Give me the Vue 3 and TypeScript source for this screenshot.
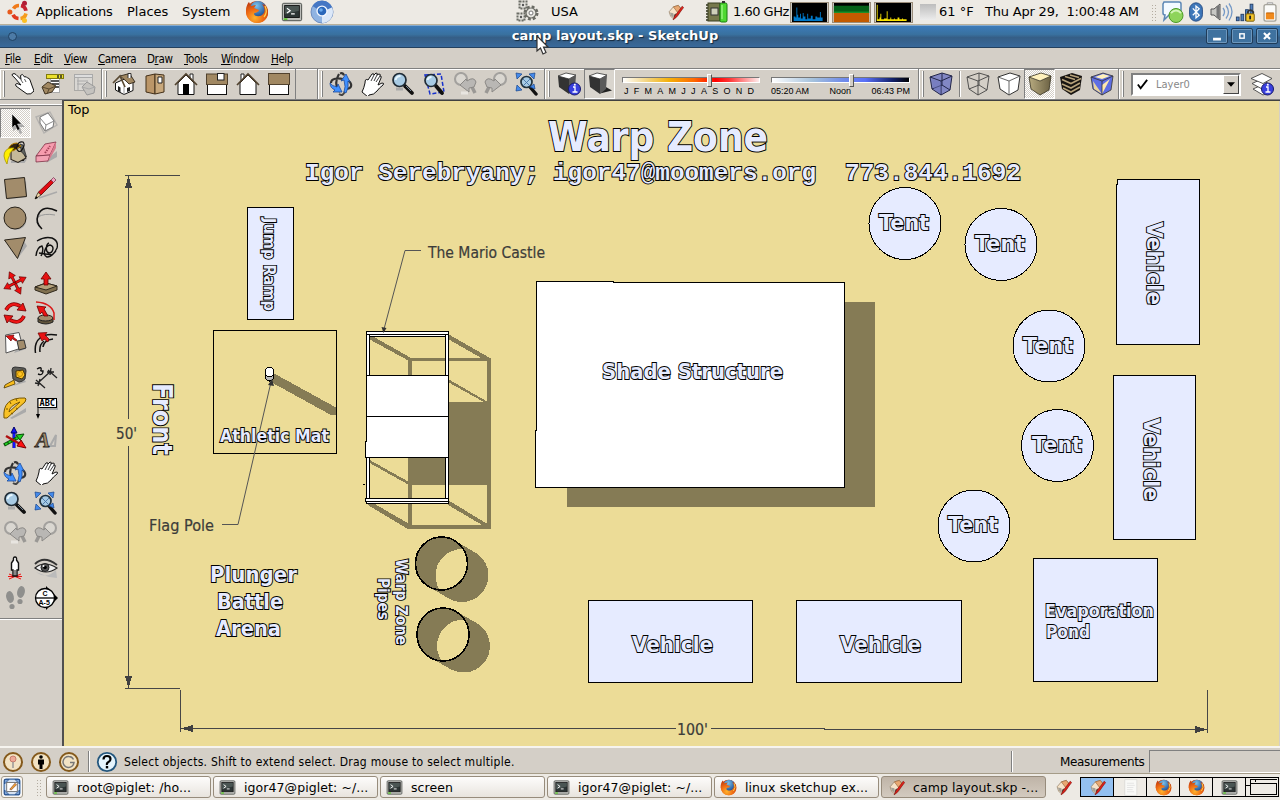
<script setup lang="ts">
interface Label { t: string; x: number; y: number; w: number; s: number; r?: number }

const menus: string[] = ['File', 'Edit', 'View', 'Camera', 'Draw', 'Tools', 'Window', 'Help']

const toolGroups: string[][] = [
  ['select', 'component', 'paint', 'eraser'],
  ['rect', 'pencil', 'circle', 'arc', 'polygon', 'freehand'],
  ['move', 'pushpull', 'rotate', 'followme', 'scale', 'offset'],
  ['tape', 'dimension', 'protractor', 'textlabel', 'axes', 'text3d'],
  ['orbit', 'pan', 'zoom', 'zoomext', 'prev', 'next'],
  ['camera', 'look', 'walk', 'section'],
]

const tasks: { icon: string; text: string; active?: boolean }[] = [
  { icon: 'terminal', text: 'root@piglet: /ho...' },
  { icon: 'terminal', text: 'igor47@piglet: ~/...' },
  { icon: 'terminal', text: 'screen' },
  { icon: 'terminal', text: 'igor47@piglet: ~/...' },
  { icon: 'firefox', text: 'linux sketchup ex...' },
  { icon: 'sketchup', text: 'camp layout.skp -...', active: true },
]

const pager: string[] = ['sketchup', 'doc', 'firefox', 'firefox', 'terminal']

const labels: Label[] = [
  { t: 'Warp Zone', x: 548, y: 151, w: 220, s: 40 },
  { t: 'Tent', x: 879, y: 230, w: 50, s: 21 },
  { t: 'Tent', x: 975, y: 251, w: 50, s: 21 },
  { t: 'Tent', x: 1023, y: 353, w: 50, s: 21 },
  { t: 'Tent', x: 1032, y: 452, w: 50, s: 21 },
  { t: 'Tent', x: 948, y: 532, w: 50, s: 21 },
  { t: 'Vehicle', x: 1147, y: 222, w: 83, s: 22, r: 90 },
  { t: 'Vehicle', x: 1144, y: 418, w: 83, s: 22, r: 90 },
  { t: 'Vehicle', x: 632, y: 652, w: 81, s: 21.5 },
  { t: 'Vehicle', x: 840, y: 652, w: 81, s: 21.5 },
  { t: 'Evaporation', x: 1045, y: 617, w: 109, s: 18 },
  { t: 'Pond', x: 1046, y: 638, w: 44, s: 18 },
  { t: 'Shade Structure', x: 602, y: 379, w: 181, s: 21 },
  { t: 'Front', x: 153, y: 383, w: 72, s: 27, r: 90 },
  { t: 'Jump Ramp', x: 264, y: 218, w: 93, s: 16.5, r: 90 },
  { t: 'Athletic Mat', x: 220, y: 442, w: 109, s: 18 },
  { t: 'Plunger', x: 210, y: 582, w: 87, s: 21.5 },
  { t: 'Battle', x: 217, y: 609, w: 66, s: 21.5 },
  { t: 'Arena', x: 216, y: 636, w: 65, s: 21.5 },
  { t: 'Warp Zone', x: 396, y: 559, w: 86, s: 16, r: 90 },
  { t: 'Pipes', x: 377.5, y: 578, w: 42, s: 16, r: 90 },
]

const tents: [number, number][] = [[905, 223.5], [1001, 244.5], [1049, 346], [1057.5, 445.5], [974, 526]]
const pipes = [
  { id: 'pipeA', x: 441.5, y: 563.5, sx: 462, sy: 575.5 },
  { id: 'pipeB', x: 443, y: 634.5, sx: 463.5, sy: 646 },
]
const months = 'JFMAMJJASOND'.split('')

const turn = (l: Label): string | undefined => (l.r ? `rotate(${l.r} ${l.x} ${l.y})` : undefined)
</script>

<template>
  <div class="screen">
    <svg class="sprite" width="0" height="0" aria-hidden="true">
      <defs>
        <linearGradient id="cubeTan" x1="0" y1="0" x2="1" y2="0"><stop offset="0" stop-color="#b8ab80" /><stop offset="1" stop-color="#6b6143" /></linearGradient>
        <radialGradient id="ffOrange" cx=".4" cy=".75" r=".8"><stop offset="0" stop-color="#ffb32c" /><stop offset=".5" stop-color="#ee6a14" /><stop offset="1" stop-color="#b8330c" /></radialGradient>
        <radialGradient id="ffBlue" cx=".4" cy=".3" r=".8"><stop offset="0" stop-color="#7cc4ee" /><stop offset="1" stop-color="#123f88" /></radialGradient>
      </defs>
      <symbol id="ubuntu" viewBox="0 0 24 24">
        <g fill="none" stroke-width="3.6">
          <path d="M6.500 8.600A6.500 6.500 0 0 1 12 5.500" stroke="#f07a1a" /><path d="M14 5.600A6.500 6.500 0 0 1 19 10.800" stroke="#c5222f" />
          <path d="M6 14.800A6.500 6.500 0 0 0 11.500 18.500" stroke="#e03a20" /><path d="M13.500 18.500A6.500 6.500 0 0 0 19 13.500" stroke="#f59b1d" />
        </g>
        <circle cx="17.5" cy="3.2" r="2.500" fill="#b01c34" /><circle cx="2.900" cy="12" r="2.500" fill="#e85a1c" /><circle cx="17.5" cy="20.6" r="2.500" fill="#fcc023" />
      </symbol>
      <symbol id="firefox" viewBox="0 0 24 24">
        <circle cx="12" cy="12" r="11" fill="url(#ffOrange)" />
        <circle cx="13" cy="9" r="8" fill="url(#ffBlue)" />
        <path d="M1 10C1 6 3 3 4 2l2 4 5-1-2 3 5 2c0 3-5 2-5 4 1 3 7 3 9 0 3-3 1-8-1-10 5 2 6 6 6 9 0 6-5 10-11 10S1 18 1 10z" fill="url(#ffOrange)" />
        <path d="M20 6q3 6-1 11" stroke="#ffd24a" stroke-width="1.3" fill="none" />
      </symbol>
      <symbol id="terminal" viewBox="0 0 24 24">
        <rect x="1.5" y="2.5" width="21" height="19" rx="1.5" fill="#bcbdb9" stroke="#444844" /><rect x="4" y="5" width="16" height="13" fill="#2c3434" stroke="#111" />
        <path d="M4.5 5.5h15v5l-15 4z" fill="#4a5553" /><path d="M6.5 8l3.5 2.5L6.5 13M11 14h4" stroke="#fff" stroke-width="1.3" fill="none" /><path d="M3 19.8h4" stroke="#60c835" stroke-width="2" />
      </symbol>
      <symbol id="chromium" viewBox="0 0 24 24">
        <circle cx="12" cy="12" r="11" fill="#8fb3e2" stroke="#6d8cbf" /><path d="M12 12L2.5 6A11 11 0 0 1 22 7.5z" fill="#4577c4" />
        <path d="M12 12l10-4.5A11 11 0 0 1 12 23z" fill="#dce8f8" /><circle cx="12" cy="11" r="5.6" fill="#f4f8ff" /><circle cx="12" cy="11" r="4.3" fill="#2a67ba" /><circle cx="11" cy="10" r="1.8" fill="#69a9ec" />
      </symbol>
      <symbol id="gears" viewBox="0 0 24 24">
        <g fill="none" stroke="#6b6c65"><circle cx="15" cy="13" r="6" stroke-width="3" stroke-dasharray="2.700 2" /><circle cx="15" cy="13" r="5" fill="#e7e6e0" stroke-width="1.200" />
          <rect x="3.500" y="1.500" width="7" height="7" fill="#e7e6e0" stroke-dasharray="2 1" stroke-width="2" /><rect x="1.500" y="13.500" width="7" height="7" fill="#e7e6e0" stroke-dasharray="2 1" stroke-width="2" /></g>
        <circle cx="7" cy="5" r="1.200" fill="#555" /><circle cx="5" cy="17" r="1.200" fill="#555" /><circle cx="15" cy="13" r="2" fill="#fff" stroke="#777" />
      </symbol>
      <symbol id="sketchup" viewBox="0 0 24 24">
        <path d="M3 11l6-7 7-2 4 5-4 9-7 5-4-4z" fill="#f7e3c8" stroke="#8f7b62" /><path d="M9 4l7-2 4 5-5 5z" fill="#e9a872" stroke="#9a6a3e" /><path d="M4 12l5 1 1 7-4-3z" fill="#a3a097" /><path d="M10 15l3-2 1 4-4 3z" fill="#55504a" /><path d="M21.500 3L11 17l-2.500 5.500L13 19 23.500 5z" fill="#e02018" stroke="#76100c" stroke-width=".8" />
      </symbol>
      <symbol id="chip" viewBox="0 0 24 24">
        <path d="M2 5h14M2 8h14M2 11h14M2 14h14M2 17h14M2 20h14" stroke="#30341c" stroke-width="1.5" /><rect x="4" y="3" width="12" height="18" fill="#77784c" stroke="#3b3e20" /><rect x="7" y="8" width="7" height="7" fill="#cfcfba" stroke="#333" />
        <rect x="16" y="3" width="7" height="19" rx="1.5" fill="#4ed830" stroke="#167a0c" /><path d="M18 5v14" stroke="#b4ffa0" /><path d="M18 2h3" stroke="#333" stroke-width="2" />
      </symbol>
      <symbol id="chat" viewBox="0 0 24 24">
        <path d="M3 2h15q2 0 2 2v9q0 2-2 2H8l-5 5 1-5q-2 0-2-2V4z" fill="#f4faff" stroke="#5b86b4" stroke-width="1.5" /><circle cx="15" cy="15.5" r="7" fill="#8ed45a" stroke="#4a9a24" /><path d="M10 13q5-5 10 0" stroke="#d2f4b8" fill="none" stroke-width="2" />
      </symbol>
      <symbol id="bluetooth" viewBox="0 0 24 24">
        <rect x="5" y="2" width="14" height="20" rx="7" fill="#3e77b9" stroke="#244c83" /><path d="M8.5 8l7 7.5-3.5 3v-13l3.5 3-7 7" stroke="#fff" stroke-width="1.4" fill="none" />
      </symbol>
      <symbol id="volume" viewBox="0 0 24 24">
        <path d="M2 9h3l6-5v16l-6-5H2z" fill="#c8c8c4" stroke="#555" /><path d="M9 6v12" stroke="#777" stroke-width="3" /><path d="M14 8q3 4 0 8M17 5.5q5 6.500 0 13M20 3.500q6 8 0 17" fill="none" stroke="#7599c6" stroke-width="1.300" />
      </symbol>
      <symbol id="network" viewBox="0 0 24 24">
        <g fill="#4f7fbe" stroke="#223f68"><rect x="1.500" y="17.500" width="3" height="4" /><rect x="6.500" y="14.500" width="3" height="7" /><rect x="11.500" y="9.500" width="3" height="12" /><rect x="16.500" y="3.500" width="3" height="18" /></g>
        <path d="M14 15v-3q2.500-4 6 0v3" fill="none" stroke="#333" stroke-width="1.800" /><rect x="12" y="14" width="9" height="8" rx="1" fill="#f4c52a" stroke="#765a08" /><path d="M16.500 16v4" stroke="#222" stroke-width="2" />
      </symbol>
      <symbol id="battery" viewBox="0 0 24 24">
        <path d="M9 4V2h6v2" fill="#eee" stroke="#999" /><rect x="5.500" y="4" width="13" height="18" rx="2" fill="#fbfbf9" stroke="#a5a39a" stroke-width="1.500" /><rect x="7.500" y="13" width="9" height="7" fill="#f08a1c" /><path d="M8 13h8" stroke="#b45a05" />
      </symbol>
      <symbol id="doc" viewBox="0 0 24 24"><rect x="4" y="1" width="17" height="22" fill="#f9f9f7" stroke="#d6d6d2" /><path d="M7 6h10M7 9h11M7 12h9M7 15h8M7 18h10" stroke="#ddd" /></symbol>

      <symbol id="point" viewBox="0 0 24 24">
        <path d="M2 3q2-2 4 0l5 5-.500-4q2-2 3 0l1 1.500q2-1 3 1 2 0 2.500 2l2.500 7 1.500 4q-3 4-7 3l-7-5-4-3q-1.500-2 1-2.500l4 1.500-7-8q-2-1-2-2.500z" transform="translate(0 -.5)" fill="#fff" stroke="#111" stroke-width="1" /><path d="M11 8l2 3M14.500 7l1.500 3" stroke="#333" stroke-width=".8" />
      </symbol>
      <symbol id="material" viewBox="0 0 24 24">
        <rect x="9.500" y="3.500" width="9" height="17" fill="#fff" stroke="#aaa" /><rect x="5.500" y="2.500" width="17" height="4" fill="#ece02c" stroke="#827b0d" /><path d="M17 3v3M20 3v3M10 9h8M11 12h7M12 15h6" stroke="#222" stroke-width="1.400" /><path d="M1 15l6-5 8 4-4 6-7 2z" fill="#a18862" stroke="#3c3020" /><path d="M1 15l7 2 7-3M8 17l-2 5" stroke="#5a492f" fill="none" />
      </symbol>
      <symbol id="materialOff" viewBox="0 0 24 24">
        <rect x="2.500" y="2.500" width="18" height="16" fill="#d9d7d3" stroke="#aaa9a6" /><rect x="2.500" y="2.500" width="18" height="3" fill="#ddd" stroke="#aaa" /><path d="M5 9h11M5 12h8M6 5v13" stroke="#aaa" /><path d="M10 15l5-5 8 5-1 6-7 2z" fill="#c5c3bf" stroke="#999" /><path d="M10 15l7 2 6-2" stroke="#aaa" fill="none" />
      </symbol>
      <symbol id="iso" viewBox="0 0 24 24">
        <path d="M3.500 11v7l8.500 4.500 9-4v-9l-5-4z" fill="#fff" stroke="#111" /><path d="M12 22.500v-8" stroke="#999" fill="none" /><path d="M8 4l9.500-2.500L23 10l-6 2-3-3z" fill="#a18862" stroke="#32281a" stroke-width=".9" /><path d="M1 11l7-7 5 11" fill="none" stroke="#5a4a33" stroke-width="1.700" /><path d="M16 6V1.500h3V6" fill="#fff" stroke="#333" /><path d="M6 14v5l2.500 1.500v-5zM15 16l3-1v4l-3 1z" fill="#222" />
      </symbol>
      <symbol id="topview" viewBox="0 0 24 24">
        <path d="M3 4l9-2v20l-9-2z" fill="#bb9668" stroke="#433019" /><path d="M12 2l9 1v17l-9 2z" fill="#c8a87c" stroke="#433019" /><path d="M15 5h4v6h-4z" fill="#fff" stroke="#222" />
      </symbol>
      <symbol id="front" viewBox="0 0 24 24">
        <path d="M16 2h3v7h-3z" fill="#fff" stroke="#222" /><path d="M4 11l8-8 8 8v11.500H4z" fill="#fff" stroke="#111" /><path d="M1 13L12 2l11 11" fill="none" stroke="#51422e" stroke-width="1.700" /><rect x="9" y="12" width="6" height="11" fill="#000" />
      </symbol>
      <symbol id="right" viewBox="0 0 24 24">
        <rect x="2.500" y="12" width="19" height="10.500" fill="#fff" stroke="#111" /><rect x="1.500" y="2" width="21" height="10.500" fill="#a18862" stroke="#51422e" /><rect x="12.500" y="1.500" width="6.500" height="6.500" fill="#fff" stroke="#222" />
      </symbol>
      <symbol id="back" viewBox="0 0 24 24">
        <path d="M5 2h3v7H5z" fill="#fff" stroke="#222" /><path d="M4 11l8-8 8 8v11.500H4z" fill="#fff" stroke="#111" /><path d="M1 13L12 2l11 11" fill="none" stroke="#51422e" stroke-width="1.700" />
      </symbol>
      <symbol id="left" viewBox="0 0 24 24"><rect x="2.500" y="12" width="19" height="10.500" fill="#fff" stroke="#111" /><rect x="1.500" y="1.500" width="21" height="11" fill="#a18862" stroke="#51422e" /></symbol>

      <symbol id="orbit" viewBox="0 0 24 24">
        <path d="M2 11c0-5 7-5 12-4q7 1 8 5t-4 5M10 2Q4 12 11 20M11 1.500q3-1 4 2" fill="none" stroke="#333" stroke-width="2.200" /><path d="M10 22q4 3 6-3" fill="none" stroke="#444" stroke-width="2" /><path d="M1 11q2 3 7 4l1-3 4 8-9 0 2-2Q1 16 1 11z" fill="#3f90ff" stroke="#1c4a99" stroke-width=".8" /><path d="M17 21q3-5 2-12l2 1-4-8-5 7 3-1q2 7 0 12z" fill="#3f90ff" stroke="#1c4a99" stroke-width=".8" />
      </symbol>
      <symbol id="pan" viewBox="0 0 24 24">
        <path d="M2 20q2-4 3-9Q5 6 8 8L12 2q2-1 2 1l2-2q2 0 1 2l2-1q2 0 1 2 2 0 1 2l-3 7 4-2q3 0 1 2-4 3-6 6-3 4-8 4l-1 2z" fill="#fff" stroke="#111" stroke-width="1" /><path d="M11 9l3-6M14 9l3-6M16 10l4-6" stroke="#222" stroke-width=".9" />
      </symbol>
      <symbol id="zoom" viewBox="0 0 24 24">
        <path d="M5 17h7" stroke="#aaa" stroke-width="3" /><path d="M14 14l7 7" stroke="#111" stroke-width="3.800" stroke-linecap="round" /><path d="M15 14l5 5" stroke="#789" stroke-width="1" /><circle cx="8.500" cy="8" r="6.500" fill="#a8cbe4" stroke="#202c36" stroke-width="1.700" /><path d="M4.500 8q1-4 5-4" stroke="#e8f8ff" stroke-width="2" fill="none" />
      </symbol>
      <symbol id="zoomwin" viewBox="0 0 24 24">
        <path d="M3 3l16-1 3 18-14 2z" fill="none" stroke="#1731cd" stroke-width="1.500" stroke-dasharray="4 2" /><path d="M14 14l6 7" stroke="#111" stroke-width="3.800" stroke-linecap="round" /><circle cx="9" cy="8.500" r="6" fill="#a8cbe4" stroke="#202c36" stroke-width="1.700" /><path d="M5.500 8q1-3 4-3" stroke="#e8f8ff" stroke-width="2" fill="none" />
      </symbol>
      <symbol id="zoomext" viewBox="0 0 24 24">
        <path d="M15 15l6 7" stroke="#111" stroke-width="3.400" stroke-linecap="round" /><circle cx="11.500" cy="10" r="5.500" fill="#a8cbe4" stroke="#22333e" stroke-width="1.700" /><path d="M8 7l7 7M15 7l-7 7" stroke="#4775a6" stroke-width=".9" />
        <g fill="#4389eb" stroke="#17458c" stroke-width=".7"><path d="M1 1l6 1-5 5zM20 1l-6 1 5 5zM1 19l6-1-5-5zM20 17l-5-2 4-3z" /></g>
      </symbol>
      <symbol id="prev" viewBox="0 0 24 24">
        <circle cx="8" cy="7" r="6" fill="#dad7d1" stroke="#a3a19e" stroke-width="2.100" /><path d="M19 15l3 6" stroke="#9a9895" stroke-width="3.500" /><path d="M7 13l6-6 1 2q7-5 9 1l-2 5-5 1 0 4z" fill="#b9b7b4" stroke="#8b8986" /><path d="M8 21h7" stroke="#e8e5e0" stroke-width="3" />
      </symbol>
      <symbol id="next" viewBox="0 0 24 24"><g transform="translate(24) scale(-1 1)"><circle cx="8" cy="7" r="6" fill="#dad7d1" stroke="#a3a19e" stroke-width="2.100" /><path d="M19 15l3 6" stroke="#9a9895" stroke-width="3.500" /><path d="M7 13l6-6 1 2q7-5 9 1l-2 5-5 1 0 4z" fill="#b9b7b4" stroke="#8b8986" /></g></symbol>

      <symbol id="cubeinfo" viewBox="0 0 24 24">
        <path d="M1 4l8-3 10 2-7 4z" fill="#fff" stroke="#333" stroke-width=".8" /><path d="M1 4l11 3v15L2 15z" fill="#333" /><path d="M12 7l7-4-1 14-6 5z" fill="#565656" /><circle cx="17.500" cy="17" r="6" fill="#3a40de" stroke="#16196c" /><path d="M16 15h2v5M15.500 20h5" fill="none" stroke="#fff" stroke-width="1.300" /><path d="M17.800 11.800v1.800" stroke="#fff" stroke-width="1.800" />
      </symbol>
      <symbol id="cubeshade" viewBox="0 0 24 24">
        <path d="M12 21.500l12-3-7-4z" fill="#222" /><path d="M1 4l8-3 10 2-7 4z" fill="#fff" stroke="#333" stroke-width=".8" /><path d="M1 4l11 3v15L2 15z" fill="#333" /><path d="M12 7l7-4-1 14-6 5z" fill="#5a5a5a" />
      </symbol>
      <symbol id="xray" viewBox="0 0 24 24">
        <path d="M1 5l12-4 10 3-2 14-9 5-9-6z" fill="#8287c4" /><path d="M1 5l11 4 11-5M1 5l12-4 10 3-2 14-9 5-9-6zM12 9v14M13 1v12l8 5M13 13L3 17" fill="none" stroke="#22264a" stroke-width="1" /><path d="M3 7l9 3v12l-8-6z" fill="#6e76bd" opacity=".5" />
      </symbol>
      <symbol id="wire" viewBox="0 0 24 24">
        <path d="M1 5l12-4 10 3-2 14-9 5-9-6zM1 5l11 4 11-5M12 9v14M13 1v12l8 5M13 13L3 17" fill="none" stroke="#444" stroke-width=".9" />
      </symbol>
      <symbol id="hidden" viewBox="0 0 24 24"><path d="M1 5l12-4 10 3-2 14-9 5-9-6z" fill="#fff" stroke="#333" /><path d="M1 5l11 4 11-5M12 9v14" fill="none" stroke="#555" stroke-width=".9" /></symbol>
      <symbol id="shaded" viewBox="0 0 24 24"><path d="M1 5l11 4 11-5-2 14-9 5-9-6z" fill="url(#cubeTan)" /><path d="M1 5l12-4 10 3-11 5z" fill="#fff1bc" /><path d="M1 5l12-4 10 3-2 14-9 5-9-6zM1 5l11 4 11-5" fill="none" stroke="#35301e" stroke-width=".8" /></symbol>
      <symbol id="textured" viewBox="0 0 24 24"><path d="M1 5l12-4 10 3-2 14-9 5-9-6z" fill="#171411" /><path d="M3 7.500l9 4 10-5M3 12l9 4 9-5M4 16l8 4 9-5M6 4.500l10 3M11 3l9 2.500" fill="none" stroke="#b6a27a" stroke-width="1.600" /></symbol>
      <symbol id="mono" viewBox="0 0 24 24"><path d="M1 5l12-4 10 3-2 14-9 5-9-6z" fill="#5f6ee3" /><path d="M5 5l8-3 7 2-8 3z" fill="#fff1bc" /><path d="M3 9l9 13-8-5z" fill="#e9d49b" /><path d="M12 22V13l8-6z" fill="#ffe8ae" /><path d="M1 5l12-4 10 3-2 14-9 5-9-6zM1 5l11 4 11-5M12 9v14" fill="none" stroke="#333" stroke-width=".8" /></symbol>
      <symbol id="layers" viewBox="0 0 24 24">
        <g fill="#fff" stroke="#444" stroke-width=".9"><path d="M3 17l9-4 10 6-9 4z" /><path d="M2 11.500l9-4 11 6-9 4z" /><path d="M1 6.500l11-5 10 5-9 5z" /></g><circle cx="17.500" cy="17" r="6" fill="#3a40de" stroke="#16196c" /><path d="M16 15h2v5M15.500 20h5" fill="none" stroke="#fff" stroke-width="1.300" /><path d="M17.800 11.800v1.800" stroke="#fff" stroke-width="1.800" />
      </symbol>

      <symbol id="select" viewBox="0 0 24 24"><path d="M10 5v15l4-3 3 6 2-1-2-6h5z" fill="#aaa" /><path d="M9 3v14l3-3 2.500 5.500 2.500-1.500-2.500-5h4z" fill="#000" stroke="#eee" stroke-width=".5" /></symbol>
      <symbol id="component" viewBox="0 0 24 24"><path d="M2 6L16 1l7 13-13 8z" fill="none" stroke="#b5b3b0" stroke-width="1.400" /><path d="M6 6l8-4 6 8-1 6-8 4-5-8z" fill="#fff" stroke="#777" /><path d="M6 7l6 7 8-4M12 14l-1 6" fill="none" stroke="#888" /></symbol>
      <symbol id="paint" viewBox="0 0 24 24">
        <path d="M8 21h13l2-3" stroke="#aaa" stroke-width="2" /><path d="M8 9l10-3 5 11-8 4.500-7-3z" fill="#c5b999" stroke="#27211a" stroke-width="1.100" /><path d="M17 3l3 1 3.500 12-5-5z" fill="#5f625e" stroke="#222" stroke-width=".7" /><path d="M5 9q2-7 9-7l4 3-8 5z" fill="#312313" stroke="#b98000" /><path d="M13 6q2 6 5 4 5-6 2-9-5-1-6 5" fill="none" stroke="#111" stroke-width="1.100" /><path d="M8 7q-7 1-7 8l1 4 2 4 1-5q2-4 2-6l4-5z" fill="#ffef00" stroke="#a99700" stroke-width=".8" />
      </symbol>
      <symbol id="eraser" viewBox="0 0 24 24"><path d="M12 22l11-6v-6l-6 5z" fill="#aaa" /><path d="M2 15L11 3l11-2-6 13z" fill="#f79cae" stroke="#7c3044" stroke-width=".8" /><path d="M2 15l14-1-2 6-12 1z" fill="#f3a2b4" stroke="#7c3044" stroke-width=".8" /><path d="M16 14l6-13v6l-8 14z" fill="#d8798c" /><path d="M11 12l5-7" stroke="#a34259" stroke-width="2" stroke-dasharray="1.500 1" /></symbol>
      <symbol id="rect" viewBox="0 0 24 24"><path d="M4 23.500L24 21 23 5z" fill="#aaa" /><path d="M1.500 3.500l20-2 2 19-20 2z" fill="#a28c6b" stroke="#28231b" /></symbol>
      <symbol id="pencil" viewBox="0 0 24 24"><path d="M5 22l18-6" stroke="#aaa" stroke-width="1.500" /><path d="M4 16.500L17 4l2.500 2.500L7 19z" fill="#e20b12" stroke="#600" stroke-width=".8" /><path d="M17 4l2.500-2.500 2.500 2.500-2.500 2.500z" fill="#f3a1c0" stroke="#745" stroke-width=".8" /><path d="M4 16.500l-3 6.500 6-4z" fill="#f2d7a6" stroke="#432" stroke-width=".8" /><path d="M1 23l1-3 2 2z" fill="#000" /></symbol>
      <symbol id="circle" viewBox="0 0 24 24"><circle cx="13" cy="13.500" r="10.500" fill="#aaa" /><circle cx="12" cy="12" r="11" fill="#a28c6b" stroke="#28231b" /></symbol>
      <symbol id="arc" viewBox="0 0 24 24"><path d="M4 11q6-4 17-2M3 17q0-6 3-9" stroke="#999" fill="none" /><path d="M8 23Q1 17 4 9 9-2 23 5" fill="none" stroke="#111" stroke-width="1.600" /></symbol>
      <symbol id="polygon" viewBox="0 0 24 24"><path d="M15 22l9-12-3-5z" fill="#aaa" /><path d="M1.500 4l21-2.500-8 21z" fill="#a28c6b" stroke="#28231b" /></symbol>
      <symbol id="freehand" viewBox="0 0 24 24"><path d="M3 5q8-5 15-3 7 3 5 10-4 9-10 9c-5-2-2-11 3-12 5 1 3 8-1 8-4-1-3-9 0-10M2 20q1-9 6-10 2 4-1 10M5 17l13 2 4-4" fill="none" stroke="#111" stroke-width="1.400" /></symbol>
      <symbol id="move" viewBox="0 0 24 24"><g fill="#f00e0e" stroke="#5a0000" stroke-width=".6"><path v-for="a in [-27, 63, 153, 243]" :key="a" d="M10.900 12V5.500H8.300L12-.500l3.700 6H13.100V12z" :transform="`rotate(${a} 12 12)`" /></g></symbol>
      <symbol id="pushpull" viewBox="0 0 24 24"><path d="M1 16l11-4 11 3v4l-11 4-11-4z" fill="#80704f" stroke="#30291d" /><path d="M1 16l11-4 11 3-11 4z" fill="#b4a07a" stroke="#30291d" /><path d="M10 14V8H7l5-7 5 7h-3v6z" fill="#e51313" stroke="#600" stroke-width=".8" /></symbol>
      <symbol id="rotate" viewBox="0 0 24 24"><path d="M3 9q5-9 14-4M21 15q-4 9-14 4" fill="none" stroke="#700" stroke-width="3.800" /><path d="M3 9q5-9 14-4M21 15q-4 9-14 4" fill="none" stroke="#ed1414" stroke-width="2.400" /><path d="M20 2l3 8-9-1zM4 22L1 14l9 1z" fill="#ed1414" stroke="#600" stroke-width=".8" /></symbol>
      <symbol id="followme" viewBox="0 0 24 24"><path d="M4 17v4q8 4 15 0v-4z" fill="#62553c" stroke="#222" /><ellipse cx="11.500" cy="17" rx="7.500" ry="3" fill="#a28c6b" stroke="#222" /><path d="M2 1q15 1 18 11v7" fill="none" stroke="#da1919" stroke-width="1.500" /><path d="M10 15l-2-4-2 2-3-8 9 1-2 2 4 7z" fill="#ec1212" stroke="#600" stroke-width=".8" /></symbol>
      <symbol id="scale" viewBox="0 0 24 24"><path d="M20 8l3 10-12 4z" fill="#aaa" /><path d="M3.500 4L17 1.500l4 15L4 22z" transform="translate(-1 0)" fill="#fff" stroke="#555" /><path d="M14 10l7-1 2 8-7 2z" fill="#a28c6b" stroke="#333" /><path d="M13 10L9 7.500 8 10 3 5l8-1-1 2 4 3z" fill="#e81313" stroke="#600" stroke-width=".7" /></symbol>
      <symbol id="offset" viewBox="0 0 24 24"><path d="M1.500 22Q0 12 6 7T23 4M9 16q1-7 10-8M6 21q-1-7 4-11" fill="none" stroke="#111" stroke-width="1.500" /><path d="M14 11l-4-3-2 2-4-8 9-.5-2 2.500 4 4z" fill="#e81313" stroke="#600" stroke-width=".7" /></symbol>
      <symbol id="tape" viewBox="0 0 24 24"><path d="M10 20l13-4-2-3z" fill="#aaa" /><path d="M9 4q0-3 3-3l9 1q2 0 2 3l-1 8q-3 3-6 3l-6-3z" fill="#5c5c57" stroke="#333" /><path d="M13 5l7-1 2 5-3 4-6-2z" fill="#ffc524" stroke="#473408" /><circle cx="17" cy="8" r="2.500" fill="none" stroke="#c78d00" /><path d="M11 14L2 19l-1 3 11-4z" fill="#f9bd1d" stroke="#4d3802" stroke-width=".8" /></symbol>
      <symbol id="dimension" viewBox="0 0 24 24"><path d="M2 14l9 8M14 4l9 8M5 16L17 5M1 17l6 1M6 13l-2 7M13 6l7 0M17 2l-1 7" stroke="#222" stroke-width="1.300" /><path d="M3 3q5-3 4 1-1 1 2 1 0 5-5 3" fill="none" stroke="#111" stroke-width="1.400" /></symbol>
      <symbol id="protractor" viewBox="0 0 24 24"><path d="M7 22l16-10v4L9 23z" fill="#aaa" /><path d="M1 22Q-1 1 22 2q2 0 0 4L4 22zM6 16q0-6 11-10z" fill="#f9c226" fill-rule="evenodd" stroke="#785700" /><path d="M3 13l2 0M7 6l1 2M13 3l1 2M8 17l2 1M13 12l2 1" stroke="#785700" /></symbol>
      <symbol id="textlabel" viewBox="0 0 24 24"><path d="M5 11h19v3H6zM22 5h2v8h-2z" fill="#aaa" /><path d="M4 2.500v18" stroke="#111" /><path d="M2 18h4l-2 5z" fill="#000" /><rect x="4" y="2.500" width="18.500" height="9" fill="#fff" stroke="#000" /></symbol>
      <symbol id="axes" viewBox="0 0 24 24"><path d="M11 22V6" stroke="#006" stroke-width="3" /><path d="M11 22V6" stroke="#1414ff" stroke-width="2" /><path d="M8 7l3-6 3 6z" fill="#1414ff" stroke="#006" /><path d="M1 19l15-8" stroke="#064c06" stroke-width="3.600" /><path d="M2 18.500l14-7.500" stroke="#21d021" stroke-width="1.800" stroke-dasharray="3 1" /><path d="M13 9l8-1-4 6z" fill="#21d021" stroke="#064c06" /><path d="M3 10l14 8" stroke="#b01010" stroke-width="2.400" /><path d="M14 20l9 2-5-8z" fill="#f11" stroke="#700" /></symbol>
      <symbol id="text3d" viewBox="0 0 24 24"><path d="M16 20L22 9l-1 11z" fill="none" stroke="#aaa" stroke-width="2" /></symbol>
      <symbol id="camera" viewBox="0 0 24 24"><path d="M6 18l12 5M18 18L6 23M5 20.500h14" stroke="#e11" /><path d="M12 1q2 0 1.500 3l2 3v7h-1.500v6h-4v-6H8.500V7l2-3Q10 1 12 1z" fill="#fff" stroke="#111" stroke-width="1.400" /><path d="M12 14v6" stroke="#111" /></symbol>
      <symbol id="look" viewBox="0 0 24 24"><path d="M2 16q10 8 20-2l1 8-8-1z" fill="#bbb" /><path d="M1 12Q10 4 23 12 12 20 1 12z" fill="#eee" stroke="#222" stroke-width="1.200" /><circle cx="11" cy="11.500" r="4" fill="#555" stroke="#222" /><circle cx="11" cy="11.500" r="1.800" fill="#000" /><circle cx="9.500" cy="10" r="1" fill="#fff" /><path d="M1 8Q10-1 23 9" fill="none" stroke="#333" stroke-width="1.800" /></symbol>
      <symbol id="walk" viewBox="0 0 24 24"><g fill="#8f8f8d"><ellipse cx="7" cy="11" rx="3.800" ry="6" transform="rotate(-12 7 11)" /><circle cx="9" cy="20.500" r="2.600" /><ellipse cx="18" cy="6" rx="3.800" ry="6" transform="rotate(12 18 6)" /><circle cx="17" cy="15.500" r="2.600" /></g></symbol>
      <symbol id="section" viewBox="0 0 24 24"><path d="M12 0l12 12-12 12z" fill="#000" /><circle cx="11" cy="12" r="9.500" fill="#fff" stroke="#000" stroke-width="1.300" /><path d="M1 12h21" stroke="#000" stroke-width="1.300" /></symbol>
      <symbol id="desktop" viewBox="0 0 24 24"><rect x="1.500" y="1.500" width="21" height="21" rx="3" fill="#d6e2f1" stroke="#3465a4" stroke-width="1.500" /><g fill="#7ea4d6" stroke="#204a87"><path d="M2 2h6l-6 6zM22 2h-6l6 6zM2 22h6l-6-6zM22 22h-6l6-6z" /></g><rect x="5" y="6" width="14" height="12" fill="#fff" stroke="#555" /><path d="M9 15l7-8 2 2-7 7z" fill="#f4a12c" stroke="#854" /></symbol>
    </svg>

    <header class="panel">
      <span></span>
      <svg class="i24"><use href="#ubuntu" /></svg>
      <span class="pt ls1">Applications</span><span class="pt">Places</span><span class="pt">System</span>
      <svg class="i24"><use href="#firefox" /></svg><svg class="i22"><use href="#terminal" /></svg><svg class="i24"><use href="#chromium" /></svg>
      <svg class="i24"><use href="#gears" /></svg><span class="pt">USA</span>
      <svg class="i16"><use href="#sketchup" /></svg><svg class="i24"><use href="#chip" /></svg><span class="pt ghz">1.60 GHz</span>
      <svg class="graph" viewBox="0 0 39 21"><rect width="39" height="21" fill="#000" /><path d="M2 18v-3h2v1h1V5h1v8h1v3h2v-4h1v5h2v-6h1v4h2v3h2v-6h1v5h3v-3h2v4h3v-3h2v1h3v-6h1v6h2v4H2z" fill="#0079c9" /></svg>
      <svg class="graph" viewBox="0 0 39 21"><rect width="39" height="21" fill="#000" /><rect y="3" width="39" height="8" fill="#046018" /><rect y="9.500" width="39" height="1.500" fill="#15952b" /><rect y="11" width="39" height="10" fill="#c35a00" /></svg>
      <svg class="graph" viewBox="0 0 39 21"><rect width="39" height="21" fill="#000" /><path d="M1 20V2h1v16h2v-2h1v-4h1v6h3v-1h3V9h1v9h3v-2h1v2h3v-1h1v1h3v-2h2v2h3v-1h1v1h4v2H1z" fill="#f7e000" /></svg>
      <i class="weather"></i><span class="pt">61 °F</span><span class="pt date">Thu Apr 29,&nbsp; 1:00:48 AM</span>
      <i class="grip"></i>
      <svg class="i24"><use href="#chat" /></svg><svg class="i22"><use href="#bluetooth" /></svg><svg class="i24"><use href="#volume" /></svg><svg class="i22"><use href="#network" /></svg><svg class="i22"><use href="#battery" /></svg>
    </header>

    <div class="title">
      <i class="dot"></i>
      <span class="name">camp layout.skp - SketchUp</span>
      <div class="wins">
        <svg viewBox="0 0 22 16"><path d="M6.500 11.500h9" stroke="#fff" stroke-width="3" /></svg>
        <svg viewBox="0 0 22 16"><rect x="8.500" y="5.500" width="5" height="5" fill="none" stroke="#fff" stroke-width="1.600" /></svg>
        <svg viewBox="0 0 22 16"><path d="M7.500 4.500l7 7M14.500 4.500l-7 7" stroke="#fff" stroke-width="2.400" /></svg>
      </div>
      <svg class="cursor" viewBox="0 0 14 20"><path d="M1 1v15l3.500-3 2.500 6 3-1.500-2.500-5.500H12z" fill="#fff" stroke="#333" stroke-width="1.200" /></svg>
    </div>

    <nav class="menus"><span v-for="m in menus" :key="m"><template v-if="m === 'Draw'">D<u>r</u>aw</template><template v-else><u>{{ m[0] }}</u>{{ m.slice(1) }}</template></span></nav>

    <div class="toolbar">
      <div class="tg g1"><b v-for="i in ['point', 'material', 'materialOff']" :key="i"><svg class="i24"><use :href="'#' + i" /></svg></b></div>
      <div class="tg g2"><b v-for="i in ['iso', 'topview', 'front', 'right', 'back', 'left']" :key="i"><svg class="i24"><use :href="'#' + i" /></svg></b></div>
      <div class="blank"></div>
      <div class="tg g3"><b v-for="i in ['orbit', 'pan', 'zoom', 'zoomwin', 'prev', 'next', 'zoomext']" :key="i"><svg class="i24"><use :href="'#' + i" /></svg></b></div>
      <div class="tg g4">
        <b><svg class="i24"><use href="#cubeinfo" /></svg></b><b class="on flat"><svg class="i24"><use href="#cubeshade" /></svg></b>
        <div class="slider date-s"><div class="track warm"></div><i class="thumb"></i><div class="ticks"><span v-for="(m, k) in months" :key="k">{{ m }}</span></div></div>
        <div class="slider time-s"><div class="track cool"></div><i class="thumb"></i><div class="ticks"><span>05:20 AM</span><span>Noon</span><span>06:43 PM</span></div></div>
      </div>
      <div class="tg g5"><b><svg class="i24"><use href="#xray" /></svg></b><i class="bar"></i><b v-for="i in ['wire', 'hidden', 'shaded', 'textured', 'mono']" :key="i" :class="{ on: i === 'shaded' }"><svg class="i24"><use :href="'#' + i" /></svg></b></div>
      <div class="tg g6">
        <div class="combo"><svg viewBox="0 0 14 14"><path d="M2 7l3 4 7-9" fill="none" stroke="#000" stroke-width="2" /></svg><span>Layer0</span><em><svg viewBox="0 0 9 5"><path d="M0 0h9L4.500 5z" /></svg></em></div>
        <svg class="i24"><use href="#layers" /></svg>
      </div>
    </div>

    <main class="work">
      <aside class="tools">
        <div v-for="(g, n) in toolGroups" :key="n" class="grp">
          <b v-for="i in g" :key="i" :class="{ on: i === 'select' }">
            <svg class="i24" viewBox="0 0 24 24">
              <use :href="'#' + i" />
              <text v-if="i === 'textlabel'" x="5.500" y="10" class="abc" textLength="15.500" lengthAdjust="spacingAndGlyphs">ABC</text>
              <text v-else-if="i === 'text3d'" x="1.500" y="21" class="big-a">A</text>
              <template v-else-if="i === 'section'"><text x="8.500" y="10" class="tiny">C</text><text x="4.500" y="18.500" class="tiny">A-5</text></template>
            </svg>
          </b>
        </div>
        <hr />
      </aside>
      <svg class="canvas" viewBox="64 100 1216 646" width="1216" height="646">
        <rect x="64" y="100" width="1215" height="646" fill="#ecdc97" /><path d="M64 100.500h1216" stroke="#404040" />
        <text x="68" y="114" class="top" textLength="21.500" lengthAdjust="spacingAndGlyphs">Top</text>
        <g class="crisp">
          <g fill="#857b55">
            <rect x="567" y="302" width="308" height="205" />
            <rect x="448" y="402" width="43" height="83" /><rect x="408" y="457" width="42" height="28" />
            <rect x="408" y="358" width="83" height="3" /><rect x="487" y="358" width="4" height="170" /><rect x="408" y="525" width="83" height="4" /><rect x="408" y="360" width="4" height="168" />
            <path d="M367 333l44 25v4l-44-24zM448 334l42 24v5l-42-24zM448 379l40 23h-4l-36-20zM368 459l41 23v3l-41-23zM368 500l43 25v4h-3l-40-24zM448 500l41 25v4l-41-24z" />
          </g>
          <path d="M273 378l60 33" stroke="#857b55" stroke-width="9" stroke-linecap="round" />
          <g v-for="p in pipes" :key="p.id">
            <clipPath :id="p.id"><ellipse :cx="p.x" :cy="p.y" rx="26" ry="26.500" /></clipPath>
            <path :d="`M${p.x} ${p.y}L${p.sx} ${p.sy}`" stroke="#857b55" stroke-width="53" stroke-linecap="round" />
            <circle :cx="p.sx" :cy="p.sy" r="26.500" fill="#ecdc97" :clip-path="`url(#${p.id})`" />
            <ellipse :cx="p.x" :cy="p.y" rx="26" ry="26.500" fill="none" stroke="#000" stroke-width="1.600" />
          </g>
          <g fill="#e6ebff" stroke="#000">
            <rect x="247.500" y="207.500" width="46" height="112" />
            <path d="M1117.500 179.500H1199.500V344.500H1116.500V184.500H1117.500z" /><path d="M1113.500 375.500h82v164h-82z" />
            <rect x="588.500" y="600.500" width="164" height="82" /><path d="M796.500 600.500h165v82h-165z" /><rect x="1033.500" y="558.500" width="124" height="123" />
            <circle v-for="t in tents" :key="t[0]" :cx="t[0]" :cy="t[1]" r="36" />
          </g>
          <rect x="213.500" y="330.500" width="123" height="123" fill="none" stroke="#000" />
          <path d="M536.500 281.500L613 281.500V282.500L844.500 282.500V487.500H535.500V430H536.500z" fill="#fff" stroke="#000" />
          <g fill="#fff" stroke="#000">
            <rect x="366.500" y="334.500" width="3" height="167" /><rect x="445.500" y="334.500" width="3" height="167" />
            <rect x="366.500" y="331.500" width="82" height="3" /><rect x="369.500" y="334.500" width="76" height="2" />
            <path d="M366.500 375.500h82v82h-83v-16h1zM366.500 416.500h82" /><rect x="365.500" y="498.500" width="83" height="3" /><rect x="366.500" y="501.500" width="82" height="2" />
            <path d="M363 484h2" />
          </g>
          <ellipse cx="269.500" cy="377" rx="4" ry="4" fill="#bbb" stroke="#000" /><circle cx="269.500" cy="372" r="4.500" fill="#fff" stroke="#000" />
          <g fill="none" stroke="#464646">
            <path d="M125 175.500h55M128.500 176v243M128.500 446v242M125 688.500h55M180.500 690v42M1207.500 690v43M181 728.500h495M711 728.500h113v1h383" />
          </g>
          <path d="M128.500 176l3.500 12h-7zM128.500 688l3.500-12h-7zM181 728.500l12-3.500v7zM1207 729.500l-12-3.500v7z" fill="#404040" />
        </g>
        <g fill="none" stroke="#555"><path d="M421 250.500h-16L384 329M222 524.500h16L271 382" /></g>
        <path d="M383.500 333l-2-6 5 1zM272 379l-4 6 6 1z" fill="#333" />
        <g class="dim">
          <text x="428" y="258" textLength="117" lengthAdjust="spacingAndGlyphs">The Mario Castle</text><text x="149" y="531" textLength="65" lengthAdjust="spacingAndGlyphs">Flag Pole</text>
          <text x="116" y="438.500" textLength="21" lengthAdjust="spacingAndGlyphs">50'</text><text x="677" y="735" textLength="31" lengthAdjust="spacingAndGlyphs">100'</text>
        </g>
        <g class="mono">
          <text x="305" y="180" textLength="234" lengthAdjust="spacingAndGlyphs">Igor Serebryany;</text><text x="553" y="180" textLength="263" lengthAdjust="spacingAndGlyphs">igor47@moomers.org</text><text x="845" y="180" textLength="176" lengthAdjust="spacingAndGlyphs">773.844.1692</text>
        </g>
        <g class="outl"><text v-for="(l, k) in labels" :key="k" :x="l.x" :y="l.y" :font-size="l.s" :textLength="l.w" lengthAdjust="spacingAndGlyphs" :transform="turn(l)">{{ l.t }}</text></g>
      </svg>
    </main>

    <div class="status">
      <svg class="s22" viewBox="0 0 22 22"><circle cx="11" cy="11" r="9" fill="#f2e3c4" stroke="#84591b" stroke-width="2" /><circle cx="11" cy="8" r="3" fill="#edaa98" stroke="#c77c6c" /><path d="M11 11v6" stroke="#999" stroke-width="1.500" /></svg>
      <svg class="s22" viewBox="0 0 22 22"><circle cx="11" cy="11" r="9" fill="#f2e3c4" stroke="#84591b" stroke-width="2" /><circle cx="11" cy="6" r="1.800" /><path d="M8 8.500h6v5h-1.500V18h-3v-4.500H8z" /></svg>
      <svg class="s22" viewBox="0 0 22 22"><circle cx="11" cy="11" r="9" fill="#f2e3c4" stroke="#84591b" stroke-width="2" /><path d="M15.500 8.500Q14 5.500 11 5.500a5.500 5.500 0 1 0 5 6h-4" fill="none" stroke="#777" stroke-width="1.500" /></svg>
      <i class="bar"></i>
      <svg class="s22 help" viewBox="0 0 22 22"><circle cx="11" cy="11" r="9.200" fill="#e5f4fc" stroke="#24577e" stroke-width="1.800" /><path d="M7.500 8.500q0-3.500 3.500-3.500t3.500 3q0 2-2 3t-1.500 3" fill="none" stroke="#000" stroke-width="2.200" /><rect x="9.800" y="15" width="2.400" height="2.400" /></svg>
      <span class="msg">Select objects. Shift to extend select. Drag mouse to select multiple.</span>
      <span class="meas">Measurements</span><div class="box"></div>
    </div>

    <footer class="taskbar">
      <div class="show"><svg class="i18"><use href="#desktop" /></svg></div><i class="grip"></i>
      <div v-for="(t, k) in tasks" :key="k" class="task" :class="{ active: t.active }"><svg class="i16"><use :href="'#' + t.icon" /></svg><span>{{ t.text }}</span></div>
      <svg class="i16 tray"><use href="#sketchup" /></svg>
      <div class="pager"><div v-for="(p, k) in pager" :key="k" class="cell" :class="{ cur: k === 0 }"><svg class="i16"><use :href="'#' + p" /></svg></div><div class="cell last"><svg viewBox="0 0 32 19"><path d="M0 7.500h4M4.500 1v5M9.500 1v3M5 1.500h26" stroke="#000" fill="none" /><rect x="4.500" y="5.500" width="26" height="11" fill="#eeebe5" stroke="#000" /></svg></div></div>
    </footer>
  </div>
</template>

<style>
body { background: #d4cfc7; overflow: hidden; }
</style>

<style scoped>
.screen { width: 1280px; height: 800px; display: flex; flex-direction: column; overflow: hidden; position: relative; font-family: "DejaVu Sans", sans-serif; color: #000; }
.sprite { position: absolute; }
.abc { font: bold 8px "DejaVu Sans Mono", monospace; }
.big-a { font: italic bold 22px "Liberation Serif", serif; fill: #a28c6b; stroke: #28231b; stroke-width: .8; }
.tiny { font: bold 7px "Liberation Sans", sans-serif; }
svg { display: block; flex: none; }
.grp svg { overflow: visible; }
.i24 { width: 24px; height: 24px; }
.i22 { width: 22px; height: 22px; }
.i18 { width: 18px; height: 18px; }
.i16 { width: 17px; height: 17px; }
.panel { height: 25px; flex: none; box-sizing: border-box; background: #edeae4; border-bottom: 1px solid #b9b09a; display: grid; align-items: center; white-space: nowrap; overflow: hidden;
  grid-template-columns: 7px 29px 91px 55px 63px 36px 29px 206px 35px 116px 37px 28px 58px 42px 42px 46px 19px 46px 166px 10px 24px 24px 26px 24px 24px; }
.pt { font-size: 13px; position: relative; top: -1px; }
.ls1 { letter-spacing: -.25px; }
.ghz { letter-spacing: -.5px; left: 1px; }
.date { letter-spacing: -.2px; }
.graph { width: 39px; height: 21px; box-sizing: border-box; border: 1px solid #9b8d7a; }
.weather { width: 16px; height: 16px; background: linear-gradient(#bdbdbd, #ececec); }
.grip { width: 6px; height: 17px; background-image: radial-gradient(circle, #b3aca0 35%, transparent 45%); background-size: 3px 3px; }
.title { height: 23px; flex: none; box-sizing: border-box; position: relative; background: linear-gradient(#3c7ab8, #39719f 40%, #355e86 55%, #39699a); border-top: 1px solid #86abcf; border-bottom: 1px solid #24415f; display: flex; align-items: center; justify-content: center; }
.dot { position: absolute; left: 8px; top: 6px; width: 7px; height: 7px; border: 1px solid #1f4162; border-radius: 50%; background: #4d7ba6; }
.name { color: #fff; font: bold 13px "DejaVu Sans", sans-serif; letter-spacing: .1px; text-shadow: 1px 1px 1px #14283b; margin: -2px 50px 0 0; }
.wins { position: absolute; right: 2px; top: 2px; display: flex; gap: 3px; }
.wins svg { width: 22px; height: 16px; box-sizing: border-box; border: 1px solid #1f3c59; border-radius: 2px; background: #3f729f; box-shadow: inset 0 0 0 1px #6d97bd; }
.cursor { position: absolute; left: 536px; top: 9px; width: 14px; height: 20px; z-index: 3; }
.menus { height: 20px; flex: none; background: #d4cfc7; display: grid; grid-template-columns: 29px 30px 34px 49px 37px 37px 50px 40px; padding-left: 5px; align-items: center; font: 11.500px/23px "DejaVu Sans Condensed", "DejaVu Sans", sans-serif; font-stretch: condensed; letter-spacing: -.4px; }
.toolbar { height: 32px; flex: none; box-sizing: border-box; background: #d4cfc7; border-top: 1px solid #808080; box-shadow: inset 0 1px #fff; display: flex; border-bottom: 1px solid #808080; }
.tg { display: flex; align-items: center; box-sizing: border-box; position: relative; border-right: 1px solid #808080; border-left: 1px solid #fff; }
.tg::before { content: ""; position: absolute; left: 2px; top: 2px; bottom: 2px; width: 1px; background: #fff; border-right: 1px solid #808080; }
.toolbar b, .tools b { width: 31px; height: 30px; display: flex; align-items: center; justify-content: center; flex: none; box-sizing: border-box; }
b.on { border: 1px solid #808080; border-right-color: #fff; border-bottom-color: #fff; background: repeating-conic-gradient(#fff 0 25%, #d4cfc7 0 50%) 0 0 / 2px 2px; }
b.on.flat { background: #d9d5ce; }
.g1 { width: 102px; padding-left: 5px; }
.g2 { width: 194px; padding-left: 5px; }
.blank { width: 22px; border-right: 1px solid #808080; box-sizing: border-box; }
.g3 { width: 227px; padding-left: 6px; }
.g4 { width: 374px; padding-left: 7px; }
.g5 { width: 200px; padding-left: 5px; }
.g6 { width: 161px; padding-left: 11px; gap: 9px; border-right: 0; }
.bar { width: 1px; height: 26px; background: #808080; border-right: 1px solid #fff; margin: 0 1px 0 3px; }
.slider { position: relative; width: 138px; height: 30px; margin-left: 7px; display: flex; flex-direction: column; }
.time-s { margin-left: 11px; width: 139px; }
.track { height: 6px; margin-top: 8px; box-sizing: border-box; border: 1px solid #777; border-right-color: #fff; border-bottom-color: #fff; }
.warm { background: linear-gradient(90deg, #fff, #f3d37c 18%, #f4b008 34%, #ff6a00 52%, #f00 68%, #f33 78%, #ffecec); }
.cool { background: linear-gradient(90deg, #fff, #a4c1dc 30%, #7590e8 50%, #5a70f8 68%, #12206a 88%, #000); }
.thumb { position: absolute; left: 85px; top: 5px; width: 3px; height: 11px; background: #d4cfc7; border: 1px solid #fff; border-right-color: #555; border-bottom-color: #555; }
.time-s .thumb { left: 78px; }
.ticks { display: flex; justify-content: space-between; font: 9px/9px "Liberation Sans", sans-serif; margin-top: 4px; padding: 0 6px 0 2px; white-space: nowrap; }
.time-s .ticks { padding: 0; }
.combo { width: 110px; height: 23px; box-sizing: border-box; border: 2px solid #808080; border-right-color: #fff; border-bottom-color: #fff; background: #fff; display: flex; align-items: center; font: 11px "DejaVu Sans Condensed", "DejaVu Sans", sans-serif; font-stretch: condensed; color: #888; }
.combo svg { width: 13px; height: 13px; margin: 0 7px 0 3px; }
.combo em { margin-left: auto; width: 16px; height: 19px; box-sizing: border-box; border: 1px solid #fff; border-right-color: #444; border-bottom-color: #444; background: #d4cfc7; display: flex; align-items: center; justify-content: center; }
.combo em svg { width: 8px; height: 5px; margin: 0; }
.work { height: 646px; flex: none; display: flex; }
.tools { width: 64px; box-sizing: border-box; background: #d4cfc7; border-right: 2px solid #505050; padding-top: 8px; display: flex; flex-direction: column; gap: 5px; position: relative; }
.tools::before { content: ""; position: absolute; left: 0; right: 0; top: 4px; height: 1px; background: #808080; border-top: 1px solid #fff; }
.grp { display: grid; grid-template-columns: 31px 31px; }
.grp b { padding-right: 1px; }
.tools hr { border: 0; height: 1px; width: 100%; margin: 0; background: #808080; border-bottom: 1px solid #fff; }
.crisp { shape-rendering: crispEdges; }
.top { font: 12px "DejaVu Sans Condensed", "DejaVu Sans", sans-serif; }
.dim text { font: 16px "DejaVu Sans Condensed", "DejaVu Sans", sans-serif; fill: #3c3c3a; stroke: #3c3c3a; stroke-width: .2; }
.mono text { font: bold 24px "Liberation Mono", monospace; fill: #e6ebff; stroke: #000; stroke-width: 1.900; paint-order: stroke; }
.outl text { font-family: "DejaVu Sans", sans-serif; font-weight: bold; fill: #e6ebff; stroke: #000; stroke-width: 2; paint-order: stroke; }
.status { height: 28px; flex: none; box-sizing: border-box; background: #d4cfc7; border-top: 2px solid #f6f4ef; border-bottom: 1px solid #a59c88; display: flex; align-items: center; padding: 2px 0 0 2px; position: relative; }
.s22 { width: 22px; height: 22px; margin-right: 6px; }
.status .bar { height: 21px; margin: 0 6px 0 2px; }
.msg { font: 12px "DejaVu Sans Condensed", "DejaVu Sans", sans-serif; letter-spacing: .28px; width: 887px; height: 21px; line-height: 22px; border-right: 1px solid #808080; white-space: nowrap; box-shadow: 1px 0 #fff; }
.help { margin-right: 6px; }
.meas { font: 12px "DejaVu Sans", sans-serif; letter-spacing: -.35px; margin-left: 48px; width: 89px; white-space: nowrap; }
.box { flex: 1; height: 23px; box-sizing: border-box; border: 1px solid #808080; border-right: 0; border-bottom-color: #fff; }
.taskbar { height: 26px; flex: none; background: #edeae4; display: flex; align-items: center; padding-left: 1px; }
.show { width: 22px; height: 22px; box-sizing: border-box; border: 1px solid #a39a8a; border-radius: 3px; display: flex; align-items: center; justify-content: center; background: #f8f6f3; }
.taskbar .grip { margin: 0 4px 0 13px; }
.task { width: 165px; height: 22px; margin-right: 2px; box-sizing: border-box; border: 1px solid #978c7c; border-radius: 3px; background: linear-gradient(#fdfcfb, #e8e4de); display: flex; align-items: center; gap: 8px; padding-left: 5px; font-size: 12.500px; letter-spacing: .08px; white-space: nowrap; flex: none; }
.task.active { background: linear-gradient(#bfb4a7, #d3cabf); padding-left: 6px; }
.tray { margin: 0 8px 0 7px; }
.pager { display: flex; height: 20px; border: 1px solid #000; background: #000; gap: 1px; box-sizing: border-box; width: 199px; }
.cell { width: 32px; background: #eeebe5; display: flex; align-items: center; justify-content: center; overflow: hidden; flex: none; }
.cell.cur { background: #93c0f0; }
.cell.last svg { width: 32px; height: 19px; }
</style>
